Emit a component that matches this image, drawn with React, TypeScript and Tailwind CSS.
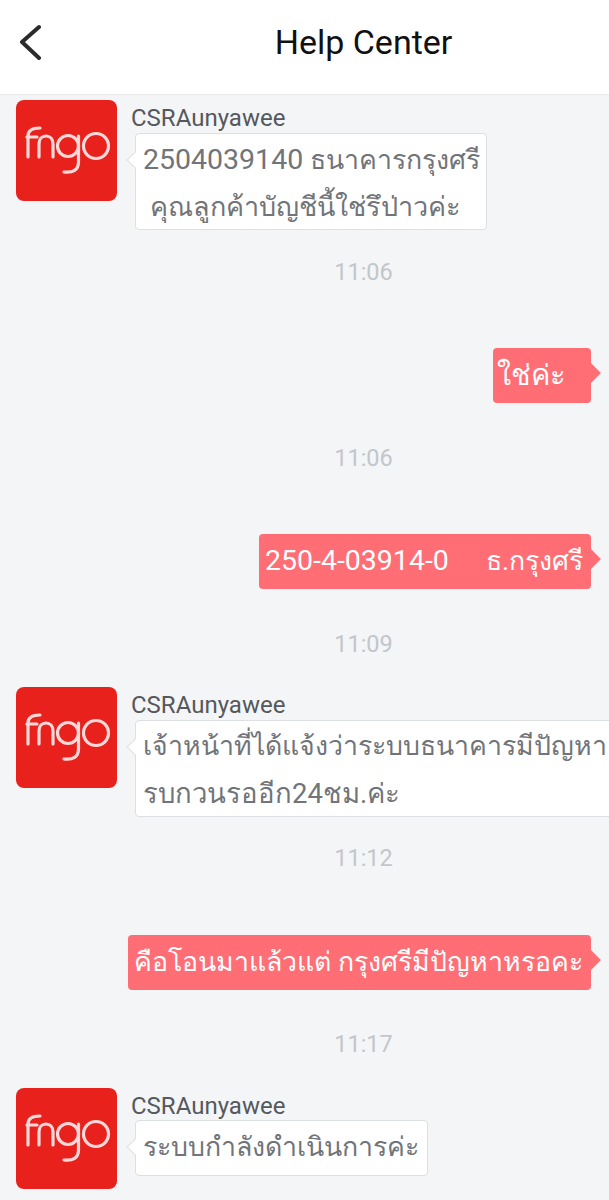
import type { ReactNode } from "react"

const FingoLogo = () => (
  <div className="size-[101px] shrink-0 rounded-[8px] bg-[#e8211c]">
    <svg viewBox="0 0 101 101" className="size-full" fill="none" stroke="#fcd9d8" strokeWidth="3.2" strokeLinecap="round">
      <path d="M12 57V36C12 31 15 28 24 28" />
      <path d="M11 37H21" />
      <path d="M23 57V44C23 39 26 36 30 36C34 36 37 39 37 44V57" />
      <circle cx="52" cy="46" r="10.5" />
      <path d="M62.5 36V62C62.5 70 57 73 48 72" />
      <circle cx="80" cy="46" r="12.5" />
    </svg>
  </div>
)

const BackIcon = () => (
  <svg viewBox="0 0 24 36" className="absolute top-[24px] left-[18px] h-[36px] w-[24px]" fill="none" stroke="#2b2b2b" strokeWidth="4" strokeLinecap="round" strokeLinejoin="round">
    <path d="M21 3L4 18L21 34" />
  </svg>
)

const LeftBubble = ({ lines, className }: { lines: ReactNode[]; className: string }) => (
  <div className={`relative rounded-[4px] border border-[#dcdfe3] bg-white ${className}`}>
    <span className="absolute top-[20px] -left-[7px] size-[12px] rotate-45 border-b border-l border-[#dcdfe3] bg-white" />
    {lines.map((line, i) => (
      <p key={i} className="relative text-[26.7px] leading-[47px] whitespace-pre text-[#717478]">
        {line}
      </p>
    ))}
  </div>
)

const IncomingMessage = ({ lines, className, mt }: { lines: ReactNode[]; className: string; mt: string }) => (
  <div className={`flex pl-4 ${mt}`}>
    <FingoLogo />
    <div className="ml-[14px] min-w-0">
      <p className="h-[33px] text-[24px] leading-[36px] text-[#55585c]">CSRAunyawee</p>
      <div className="pl-[4px]">
        <LeftBubble lines={lines} className={className} />
      </div>
    </div>
  </div>
)

const OutgoingMessage = ({ children, mt, className }: { children: ReactNode; mt: string; className: string }) => (
  <div className={`flex justify-end pr-[18px] ${mt}`}>
    <div className={`relative flex h-[55px] items-center rounded-[4px] bg-[#ff6e75] text-[26.7px] whitespace-pre text-white ${className}`}>
      <span className="absolute top-[18px] -right-[7px] size-[14px] rotate-45 bg-[#ff6e75]" />
      {children}
    </div>
  </div>
)

const Time = ({ value, mt }: { value: string; mt: string }) => (
  <p className={`h-8 pl-[118px] text-center text-[23.5px] leading-8 text-[#c3c6ca] ${mt}`}>{value}</p>
)

export default function App() {
  return (
    <div className="h-[1200px] w-[609px] overflow-hidden bg-[#f4f5f7] font-['Roboto','Noto_Sans','DejaVu_Sans',sans-serif]">
      <header className="relative flex h-[95px] items-center justify-center border-b border-[#e8e9eb] bg-white pb-[10px] pl-[118px]">
        <BackIcon />
        <h1 className="text-[34px] leading-none text-[#111]">Help Center</h1>
      </header>

      <IncomingMessage
        mt="mt-[5px]"
        className="h-[97px] w-[352px] pt-[2px] pl-[7px]"
        lines={[
          <>
            <span className="text-[28.5px]">2504039140</span> ธนาคารกรุงศรี
          </>,
          <span className="text-[27px]"> คุณลูกค้าบัญชีนี้ใช่รึป่าวค่ะ</span>,
        ]}
      />
      <Time value="11:06" mt="mt-[26px]" />
      <OutgoingMessage mt="mt-[60px]" className="w-[98px] pl-[4px]">
        <span className="relative text-[29px]">ใช่ค่ะ</span>
      </OutgoingMessage>
      <Time value="11:06" mt="mt-[39px]" />
      <OutgoingMessage mt="mt-[60px]" className="w-[332px] justify-between pr-[8px] pl-[6px]">
        <span className="relative text-[28.5px]">250-4-03914-0</span>
        <span className="relative">ธ.กรุงศรี</span>
      </OutgoingMessage>
      <Time value="11:09" mt="mt-[39px]" />
      <IncomingMessage
        mt="mt-[27px]"
        className="h-[97px] w-[490px] pt-[2px] pl-[7px]"
        lines={["เจ้าหน้าที่ได้แจ้งว่าระบบธนาคารมีปัญหา", <span className="text-[27.5px]">รบกวนรออีก24ชม.ค่ะ</span>]}
      />
      <Time value="11:12" mt="mt-[25px]" />
      <OutgoingMessage mt="mt-[61px]" className="w-[463px] pl-[6px]">
        <span className="relative">คือโอนมาแล้วแต่ กรุงศรีมีปัญหาหรอคะ</span>
      </OutgoingMessage>
      <Time value="11:17" mt="mt-[38px]" />
      <IncomingMessage
        mt="mt-[28px]"
        className="-mt-px h-[56px] w-[293px] pt-[3px] pl-[7px]"
        lines={["ระบบกำลังดำเนินการค่ะ"]}
      />
    </div>
  )
}
